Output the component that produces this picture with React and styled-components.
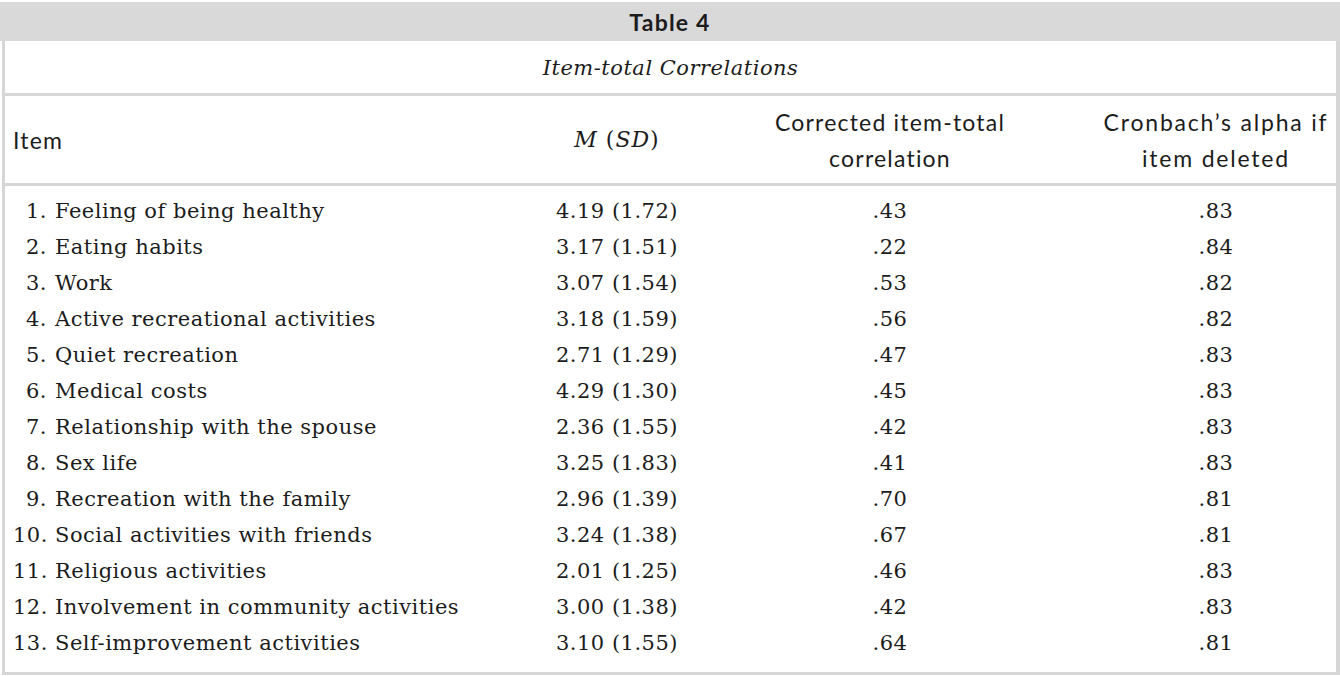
import React from "react";
import styled, { createGlobalStyle } from "styled-components";

const Global = createGlobalStyle`
  html, body { margin: 0; padding: 0; background: #ffffff; }
  body { width: 1340px; height: 676px; overflow: hidden; }
`;

const LINE = "#d6d6d6";
const SERIF = `"DejaVu Serif", "Liberation Serif", serif`;
const SANS = `Lato, "Open Sans", sans-serif`;

const Page = styled.div`
  padding-top: 2px;
  color: #1c1c1c;
`;

const TitleBand = styled.div`
  height: 39px;
  background: #d9d9d9;
  display: flex;
  align-items: center;
  justify-content: center;
  font-family: ${SANS};
  font-weight: 700;
  font-size: 23px;
  letter-spacing: 1.2px;
`;

const Box = styled.div`
  margin-left: 2px;
  width: 1331px;
  border-left: 3px solid ${LINE};
  border-right: 4px solid ${LINE};
  border-bottom: 3px solid ${LINE};
`;

const Subtitle = styled.div`
  height: 50px;
  padding-top: 2px;
  display: flex;
  align-items: center;
  justify-content: center;
  font-family: ${SERIF};
  font-style: italic;
  font-size: 21px;
  letter-spacing: 0.5px;
  border-bottom: 3px solid ${LINE};
`;

const Row = styled.div`
  display: grid;
  grid-template-columns: 475px 264px 292px 300px;
  align-items: center;
  height: ${(p) => p.$h}px;
`;

const HeadRow = styled(Row)`
  border-bottom: 3px solid ${LINE};
  font-family: ${SANS};
  font-size: 23px;
  letter-spacing: 1.2px;
  line-height: 36px;
`;

const HeadCell = styled.div`
  text-align: ${(p) => (p.$left ? "left" : "center")};
  padding-left: ${(p) => p.$pl || 0}px;
  letter-spacing: ${(p) => (p.$ls != null ? `${p.$ls}px` : "inherit")};
`;

const MathCell = styled(HeadCell)`
  font-family: ${SERIF};
  font-size: 22px;
  letter-spacing: 1px;
`;

const Ital = styled.i`
  font-style: italic;
`;

const Body = styled.div`
  padding: 7px 0 11px;
  font-family: ${SERIF};
  font-size: 21px;
  letter-spacing: 0.5px;
`;

const ItemCell = styled.div`
  display: flex;
  align-items: baseline;
  padding-left: 8px;
`;

const Num = styled.span`
  width: 34px;
  text-align: right;
  margin-right: 8px;
  flex: none;
`;

const ValCell = styled.div`
  text-align: center;
  padding-left: ${(p) => p.$pl || 0}px;
`;

const rows = [
  ["Feeling of being healthy", "4.19 (1.72)", ".43", ".83"],
  ["Eating habits", "3.17 (1.51)", ".22", ".84"],
  ["Work", "3.07 (1.54)", ".53", ".82"],
  ["Active recreational activities", "3.18 (1.59)", ".56", ".82"],
  ["Quiet recreation", "2.71 (1.29)", ".47", ".83"],
  ["Medical costs", "4.29 (1.30)", ".45", ".83"],
  ["Relationship with the spouse", "2.36 (1.55)", ".42", ".83"],
  ["Sex life", "3.25 (1.83)", ".41", ".83"],
  ["Recreation with the family", "2.96 (1.39)", ".70", ".81"],
  ["Social activities with friends", "3.24 (1.38)", ".67", ".81"],
  ["Religious activities", "2.01 (1.25)", ".46", ".83"],
  ["Involvement in community activities", "3.00 (1.38)", ".42", ".83"],
  ["Self-improvement activities", "3.10 (1.55)", ".64", ".81"],
];

export default function App() {
  return (
    <Page>
      <Global />
      <TitleBand>Table 4</TitleBand>
      <Box>
        <Subtitle>Item-total Correlations</Subtitle>
        <HeadRow $h={87}>
          <HeadCell $left $pl={8}>Item</HeadCell>
          <MathCell $pl={10}>
            <Ital>M</Ital> (<Ital>SD</Ital>)
          </MathCell>
          <HeadCell>
            Corrected item-total
            <br />
            correlation
          </HeadCell>
          <HeadCell $pl={60} $ls={1.8}>
            Cronbach’s alpha if
            <br />
            item deleted
          </HeadCell>
        </HeadRow>
        <Body>
          {rows.map((r, i) => (
            <Row key={i} $h={36}>
              <ItemCell>
                <Num>{i + 1}.</Num>
                <span>{r[0]}</span>
              </ItemCell>
              <ValCell $pl={10}>{r[1]}</ValCell>
              <ValCell>{r[2]}</ValCell>
              <ValCell $pl={60}>{r[3]}</ValCell>
            </Row>
          ))}
        </Body>
      </Box>
    </Page>
  );
}
